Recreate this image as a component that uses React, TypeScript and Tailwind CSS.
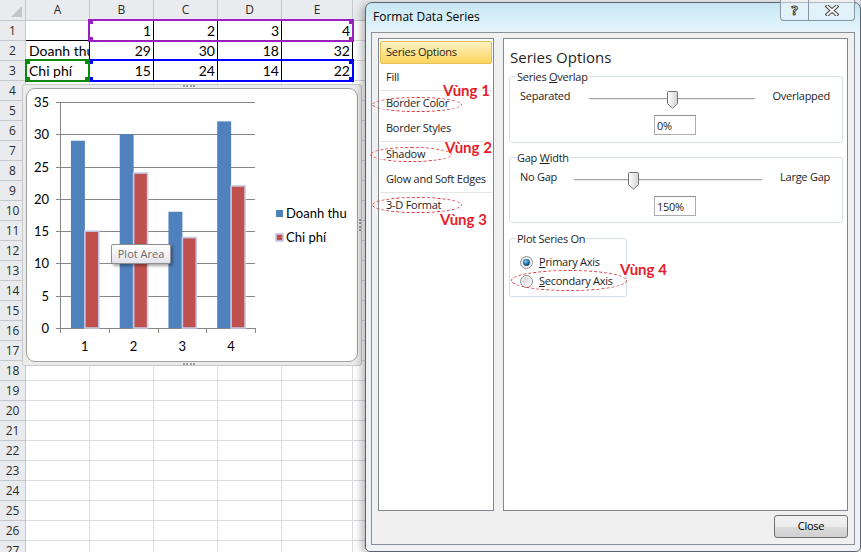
import type { ReactNode } from "react";

const ROWS = Array.from({ length: 27 }, (_, i) => i + 1);
const COLS = ["A", "B", "C", "D", "E", "F"];

const CELLS: Record<number, string[]> = {
  1: ["", "1", "2", "3", "4"],
  2: ["Doanh thu", "29", "30", "18", "32"],
  3: ["Chi phí", "15", "24", "14", "22"],
};

const SERIES = [
  { name: "Doanh thu", color: "#4f81bd", values: [29, 30, 18, 32], selected: false },
  { name: "Chi phí", color: "#c0504d", values: [15, 24, 14, 22], selected: true },
];

const NAV = [
  { label: "Series Options", active: true },
  { label: "Fill", sep: true },
  { label: "Border Color" },
  { label: "Border Styles", sep: true },
  { label: "Shadow" },
  { label: "Glow and Soft Edges", sep: true },
  { label: "3-D Format" },
];

function Sheet() {
  return (
    <div className="grid grid-cols-[26px_64px_64px_64px_64px_71px_1fr] grid-rows-[21px] auto-rows-[20px] font-['Lato',sans-serif] text-[14px] text-black">
      <div className="relative border-r border-b border-[#c5c8cc] bg-[#e9ebee]">
        <span className="absolute right-[3px] bottom-[3px] h-0 w-0 border-b-[11px] border-l-[11px] border-b-[#c2c6cb] border-l-transparent" />
      </div>
      {COLS.map((c) => (
        <div
          key={c}
          className="flex items-center justify-center border-r border-b border-[#c5c8cc] bg-[#e9ebee] font-['Open_Sans',sans-serif] text-[12px] text-[#2b2b2b]"
        >
          {c}
        </div>
      ))}
      {ROWS.map((r) => (
        <Row key={r} row={r} />
      ))}
    </div>
  );
}

function Row({ row }: { row: number }) {
  const values = CELLS[row];
  return (
    <>
      <div className="flex items-center justify-center border-r border-b border-[#c5c8cc] bg-[#e9ebee] font-['Open_Sans',sans-serif] text-[12px] text-[#2b2b2b]">
        {row}
      </div>
      {COLS.map((c, i) => {
        const inData = values !== undefined && i < 5;
        const text = values?.[i] ?? "";
        const numeric = text !== "" && !Number.isNaN(Number(text));
        return (
          <div
            key={c}
            className={`flex items-center overflow-hidden whitespace-nowrap border-r border-b ${
              inData ? "border-black" : "border-[#dadcdd]"
            } ${numeric ? "justify-end pr-[2px]" : "pl-[3px]"}`}
          >
            {text}
          </div>
        );
      })}
    </>
  );
}

function Handles({ color }: { color: string }) {
  return (
    <>
      <span className={`absolute -left-[2px] -top-[2px] h-[5px] w-[5px] ${color}`} />
      <span className={`absolute -right-[2px] -top-[2px] h-[5px] w-[5px] ${color}`} />
      <span className={`absolute -left-[2px] -bottom-[2px] h-[5px] w-[5px] ${color}`} />
      <span className={`absolute -right-[2px] -bottom-[2px] h-[5px] w-[5px] ${color}`} />
    </>
  );
}

function RangeMarks() {
  return (
    <>
      <div className="absolute left-[88px] top-[19px] h-[23px] w-[266px] border-2 border-[#9a1fc0]">
        <Handles color="bg-[#9a1fc0]" />
      </div>
      <div className="absolute left-[88px] top-[59px] h-[23px] w-[266px] border-2 border-[#0000ff]">
        <Handles color="bg-[#0000ff]" />
      </div>
      <div className="absolute left-[25px] top-[59px] h-[23px] w-[65px] border-2 border-[#0a8a0a]">
        <Handles color="bg-[#0a8a0a]" />
      </div>
    </>
  );
}

function ChartDrawing() {
  const y = (v: number) => 328 - (v * 226) / 35;
  const ticks = [0, 5, 10, 15, 20, 25, 30, 35];
  const catW = 48.75;
  const barW = 13.93;
  return (
    <svg
      width="330"
      height="272"
      viewBox="27 89 330 272"
      className="block font-['Lato',sans-serif] text-[13px]"
    >
      {ticks.map((t) => {
        const yy = Math.round(y(t)) + 0.5;
        return (
          <g key={t}>
            <line x1={56} x2={255} y1={yy} y2={yy} stroke="#868686" />
            <text x={49} y={yy + 4.5} textAnchor="end" fill="#000">
              {t}
            </text>
          </g>
        );
      })}
      <line x1={60.5} x2={60.5} y1={102} y2={328.5} stroke="#868686" />
      {[0, 1, 2, 3, 4].map((i) => {
        const xx = Math.round(60 + i * catW) + 0.5;
        return <line key={i} x1={xx} x2={xx} y1={328} y2={333} stroke="#868686" />;
      })}
      {[0, 1, 2, 3].map((i) => {
        const start = 60.5 + i * catW + barW * 0.75;
        return (
          <g key={i}>
            {SERIES.map((s, si) => (
              <rect
                key={s.name}
                x={start + si * barW}
                y={y(s.values[i])}
                width={barW}
                height={328 - y(s.values[i])}
                fill={s.color}
                stroke={s.selected ? "#c4cae8" : "none"}
                strokeWidth={s.selected ? 1.6 : 0}
              />
            ))}
            <text x={60.5 + i * catW + catW / 2} y={350.5} textAnchor="middle" fill="#000">
              {i + 1}
            </text>
          </g>
        );
      })}
      <rect x={276} y={210} width={7} height={7} fill="#4f81bd" />
      <text x={286} y={217.5} fill="#000">
        Doanh thu
      </text>
      <rect x={276} y={234} width={7} height={7} fill="#c0504d" stroke="#c4cae8" strokeWidth={1.6} />
      <text x={286} y={241.5} fill="#000">
        Chi phí
      </text>
    </svg>
  );
}

function Chart() {
  return (
    <div className="absolute left-[22px] top-[84px] h-[282px] w-[340px] rounded-[3px] border border-[#c9c9c9] bg-[#ebebeb] p-[3px]">
      <span className="absolute left-[160px] top-[0px] w-[12px] border-t-2 border-dotted border-[#9a9a9a]" />
      <span className="absolute left-[160px] bottom-[0px] w-[12px] border-t-2 border-dotted border-[#9a9a9a]" />
      <span className="absolute right-[0px] top-[134px] h-[12px] border-l-2 border-dotted border-[#9a9a9a]" />
      <div className="relative h-[274px] w-[332px] overflow-hidden rounded-[9px] border border-[#a2a2a2] bg-white">
        <ChartDrawing />
        <div className="absolute left-[84px] top-[155px] flex h-[20px] w-[60px] items-center justify-center rounded-[2px] border border-[#8f8f8f] bg-[linear-gradient(180deg,#ffffff,#e3e4ea)] font-['Open_Sans',sans-serif] text-[11px] text-[#6b6b6b] shadow-[2px_2px_3px_rgba(0,0,0,0.35)]">
          Plot Area
        </div>
      </div>
    </div>
  );
}

function Thumb() {
  return (
    <svg width="11" height="18" viewBox="0 0 11 18">
      <defs>
        <linearGradient id="thumbFill" x1="0" y1="0" x2="1" y2="0">
          <stop offset="0" stopColor="#ffffff" />
          <stop offset="1" stopColor="#d4d4d4" />
        </linearGradient>
      </defs>
      <path
        d="M1.5 0.5 H9.5 Q10.5 0.5 10.5 1.5 V12.5 L5.5 17.2 L0.5 12.5 V1.5 Q0.5 0.5 1.5 0.5 Z"
        fill="url(#thumbFill)"
        stroke="#717171"
      />
    </svg>
  );
}

function Slider({ width, thumb }: { width: string; thumb: string }) {
  return (
    <div className={`relative h-[20px] shrink-0 ${width}`}>
      <div className="mt-[12px] h-[2px] border-t border-[#a5a5a5] bg-[#e8e8e8]" />
      <div className={`absolute top-[5px] ${thumb}`}>
        <Thumb />
      </div>
    </div>
  );
}

function Group({ title, className, children }: { title: ReactNode; className?: string; children: ReactNode }) {
  return (
    <fieldset className={`rounded-[3px] border border-[#d5dfe5] ${className ?? ""}`}>
      <legend className="ml-[6px] px-[1px] leading-[15px]">{title}</legend>
      {children}
    </fieldset>
  );
}

function Spin({ value }: { value: string }) {
  return (
    <div className="flex h-[20px] w-[42px] items-center border border-[#abadb3] border-t-[#8e8f8f] pl-[2px] leading-none">
      {value}
    </div>
  );
}

function Radio({ checked }: { checked?: boolean }) {
  return (
    <svg width="13" height="13" viewBox="0 0 13 13">
      <defs>
        <linearGradient id="radioOff" x1="0" y1="0" x2="1" y2="1">
          <stop offset="0" stopColor="#d4d4d4" />
          <stop offset="1" stopColor="#f7f7f7" />
        </linearGradient>
        <radialGradient id="radioOn" cx="0.4" cy="0.35" r="0.7">
          <stop offset="0" stopColor="#8fd0f4" />
          <stop offset="0.5" stopColor="#2a7ab4" />
          <stop offset="1" stopColor="#0f3b60" />
        </radialGradient>
      </defs>
      <circle cx="6.5" cy="6.5" r="6" fill="#f4f4f4" stroke="#8e8f8f" />
      <circle cx="6.5" cy="6.5" r="4.3" fill="url(#radioOff)" />
      {checked && <circle cx="6.5" cy="6.5" r="3.4" fill="url(#radioOn)" />}
    </svg>
  );
}

function Panel() {
  return (
    <div className="flex w-[345px] flex-col border border-[#828790] bg-white pt-[8px] pr-[4px] pl-[5px]">
      <h2 className="ml-[1px] text-[15px] leading-[20px] tracking-normal text-[#1e1e1e]">Series Options</h2>

      <Group
        className="mt-[2px] pb-[7px]"
        title={
          <>
            Series <span className="underline">O</span>verlap
          </>
        }
      >
        <div className="mt-[2px] flex h-[20px] items-start pl-[10px] leading-[20px]">
          <span className="w-[69px] shrink-0">Separated</span>
          <Slider width="w-[166px]" thumb="left-[78px]" />
          <span className="flex-1 pr-[12px] text-right">Overlapped</span>
        </div>
        <div className="mt-[9px] pl-[144px]">
          <Spin value="0%" />
        </div>
      </Group>

      <Group
        className="mt-[7px] pb-[6px]"
        title={
          <>
            Gap <span className="underline">W</span>idth
          </>
        }
      >
        <div className="mt-[2px] flex h-[20px] items-start pl-[10px] leading-[20px]">
          <span className="w-[54px] shrink-0">No Gap</span>
          <Slider width="w-[188px]" thumb="left-[54px]" />
          <span className="flex-1 pr-[12px] text-right">Large Gap</span>
        </div>
        <div className="mt-[9px] pl-[144px]">
          <Spin value="150%" />
        </div>
      </Group>

      <Group className="mt-[8px] w-[118px] pb-[5px]" title="Plot Series On">
        <div className="mt-[7px] flex h-[19px] items-center gap-[6px] pl-[10px]">
          <Radio checked />
          <span>
            <span className="underline">P</span>rimary Axis
          </span>
        </div>
        <div className="flex h-[19px] items-center gap-[6px] pl-[10px]">
          <Radio />
          <span>
            <span className="underline">S</span>econdary Axis
          </span>
        </div>
      </Group>
    </div>
  );
}

function NavList() {
  return (
    <div className="flex w-[116px] flex-col border border-[#828790] bg-white pt-[1px]">
      {NAV.map((item) => (
        <div key={item.label}>
          {item.active ? (
            <div className="mx-[1px] mt-[1px] mb-[1px] flex h-[23px] items-center rounded-[2px] border border-[#e3bd55] bg-[linear-gradient(180deg,#fef3c4_0%,#fde38f_50%,#fcd45e_100%)] pl-[5px]">
              {item.label}
            </div>
          ) : (
            <div className="flex h-[25px] items-center pl-[7px]">{item.label}</div>
          )}
          {item.sep && <div className="mx-[1px] h-px bg-[#e6e6e6]" />}
        </div>
      ))}
    </div>
  );
}

function CaptionButtons() {
  return (
    <div className="-mt-[3px] ml-auto flex h-[21px] w-[75px] overflow-hidden rounded-b-[4px] border border-t-0 border-[#8896a4] bg-[linear-gradient(180deg,rgba(255,255,255,0.55),rgba(225,240,248,0.7))] tracking-normal">
      <div className="flex w-[28px] items-center justify-center border-r border-[#8896a4] text-[13px] font-bold leading-none text-[#f3f3f3] [-webkit-text-stroke:1px_#4a4a4a]">
        ?
      </div>
      <div className="flex flex-1 items-center justify-center">
        <svg width="14" height="11" viewBox="0 0 14 11">
          <path d="M2.5 1.5 L11.5 9.5 M11.5 1.5 L2.5 9.5" stroke="#4c4c4c" strokeWidth="4" strokeLinecap="square" />
          <path d="M2.5 1.5 L11.5 9.5 M11.5 1.5 L2.5 9.5" stroke="#f2f2f2" strokeWidth="2" strokeLinecap="square" />
        </svg>
      </div>
    </div>
  );
}

function Dialog() {
  return (
    <div className="absolute left-[365px] top-[2px] flex h-[550px] w-[496px] flex-col rounded-t-[7px] rounded-b-[5px] border border-[#5b646e] bg-[linear-gradient(180deg,#c6e6f3_0px,#dbf1f9_20px,#e6f3f8_30px,#eef3f7_60px,#eef2f6_100%)] px-[5px] pb-[6px] font-['Open_Sans',sans-serif] text-[11px] tracking-[-0.25px] text-[#1e1e1e] shadow-[-3px_2px_9px_rgba(0,0,0,0.3)]">
      <div className="flex h-[29px] items-start">
        <span className="pt-[6px] pl-[2px] text-[12px] leading-[16px] tracking-normal text-black">Format Data Series</span>
        <CaptionButtons />
      </div>
      <div className="flex flex-1 flex-col border border-[#8a9098] bg-[#f0f0f0] px-[6px] pt-[5px] pb-[6px]">
        <div className="flex h-[473px] gap-[9px]">
          <NavList />
          <Panel />
        </div>
        <button
          type="button"
          className="mt-[4px] h-[23px] w-[74px] self-end rounded-[3px] border border-[#707070] bg-[linear-gradient(180deg,#f2f2f2_0%,#ebebeb_50%,#dddddd_51%,#cfcfcf_100%)] text-[11px] text-black"
        >
          Close
        </button>
      </div>
    </div>
  );
}

function Notes() {
  const note = "absolute font-['Lato',sans-serif] text-[15px] font-bold leading-[16px] text-[#e5202a]";
  const ring = "absolute rounded-[50%] border border-dashed border-[#e0353a]";
  return (
    <>
      <span className={`${note} left-[443px] top-[82px]`}>Vùng 1</span>
      <span className={`${note} left-[445px] top-[139px]`}>Vùng 2</span>
      <span className={`${note} left-[440px] top-[211px]`}>Vùng 3</span>
      <span className={`${note} left-[620px] top-[261px]`}>Vùng 4</span>
      <span className={`${ring} left-[372px] top-[97px] h-[15px] w-[90px]`} />
      <span className={`${ring} left-[370px] top-[147px] h-[15px] w-[82px]`} />
      <span className={`${ring} left-[372px] top-[197px] h-[16px] w-[90px]`} />
      <span className={`${ring} left-[511px] top-[270px] h-[21px] w-[116px]`} />
    </>
  );
}

export default function App() {
  return (
    <div className="relative h-[552px] w-[861px] overflow-hidden bg-white">
      <Sheet />
      <RangeMarks />
      <Chart />
      <Dialog />
      <Notes />
    </div>
  );
}
